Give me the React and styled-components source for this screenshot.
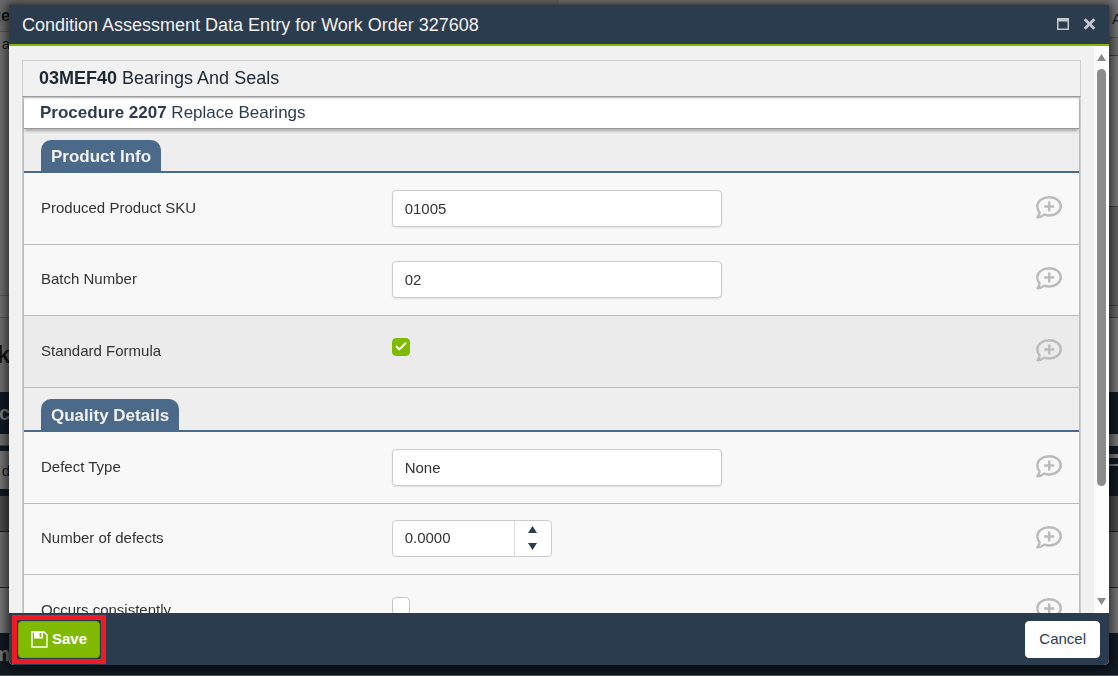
import React from "react";
import styled, { createGlobalStyle, css } from "styled-components";

const GlobalStyle = createGlobalStyle`
  *, *::before, *::after { box-sizing: border-box; }
  html, body { margin: 0; height: 100%; overflow: hidden; }
  body {
    background: #111a23;
    color: #333;
    font: 15px/20px "Liberation Sans", Arial, sans-serif;
  }
  button, input { font: inherit; color: inherit; }
  h1, h2, h3 { margin: 0; font: inherit; }
`;

/* Dimmed page behind the dialog */
const Underlay = styled.div`
  display: flex;
  justify-content: space-between;
  height: 100vh;
  overflow: hidden;
  background: #6b6b6b;
`;

const Strip = styled.div`
  flex: 1;
  display: flex;
  flex-direction: column;
  align-items: ${(p) => (p.$end ? "flex-end" : "flex-start")};
`;

const Band = styled.div`
  flex: none;
  display: flex;
  align-items: center;
  justify-content: ${(p) => (p.$end ? "flex-end" : "flex-start")};
  width: 100%;
  height: ${(p) => p.$h}px;
  background: ${(p) => p.$bg};
  border-bottom: ${(p) => (p.$line ? `1px solid ${p.$line}` : "0")};
  color: ${(p) => p.$ink || "#151515"};
  font-size: ${(p) => p.$size || 15}px;
  font-weight: ${(p) => (p.$bold ? 700 : 400)};
  line-height: 1;
`;

const Peek = styled.span`
  display: flex;
  justify-content: ${(p) => (p.$end ? "flex-start" : "flex-end")};
  width: ${(p) => (p.$end ? 6 : 10)}px;
  white-space: nowrap;
`;

const Dialog = styled.section`
  position: fixed;
  inset: 5px 9px 11px;
  display: flex;
  flex-direction: column;
  background: #f1f1f1;
  border-radius: 0 0 5px 5px;
  box-shadow: 0 1px 10px 3px rgba(0, 0, 0, 0.6);
`;

const TitleBar = styled.header`
  display: flex;
  align-items: center;
  gap: 14px;
  height: 41px;
  padding: 0 13px;
  background: #2c3c4f;
  border-bottom: 2px solid #80ba00;
  color: #f1f1f1;
`;

const Title = styled.h1`
  flex: 1;
  font-size: 18px;
  line-height: 24px;
`;

const WindowButton = styled.button`
  display: flex;
  margin-bottom: 2px;
  padding: 0;
  border: 0;
  background: none;
  color: #c3c8cd;
`;

const Viewport = styled.div`
  flex: 1;
  display: flex;
  min-height: 0;
`;

const ScrollArea = styled.div`
  flex: 1;
  min-width: 0;
  overflow-y: auto;
  scrollbar-width: none;
  padding: 14px 13px;
`;

const ScrollBar = styled.div`
  display: flex;
  flex-direction: column;
  align-items: center;
  width: 15px;
  padding: 8px 0;
  background: #fdfdfd;
  color: #8b8b8b;
`;

const Track = styled.div`
  flex: 1;
  width: 9px;
  margin: 8px 0;
`;

const Thumb = styled.div`
  height: 80%;
  border-radius: 5px;
  background: #8b8b8b;
`;

const Asset = styled.h2`
  height: 37px;
  padding: 0 16px;
  border: 1px solid #ccc;
  border-bottom-color: #9a9a9a;
  background: #f1f1f1;
  color: #1b2733;
  font-size: 18px;
  line-height: 34px;
`;

const Card = styled.div`
  border: solid #ccc;
  border-width: 0 1px;
`;

const Procedure = styled.h3`
  position: relative;
  height: 32px;
  padding: 0 16px;
  background: #fff;
  border-bottom: 1px solid #9a9a9a;
  box-shadow: 0 3px 3px -1px rgba(0, 0, 0, 0.3), inset 0 2px 2px -1px rgba(0, 0, 0, 0.3);
  color: #2c3c4f;
  font-size: 17px;
  line-height: 31px;
`;

const Group = styled.div`
  border: solid #bbb;
  border-width: 0 1px;
`;

const SectionHead = styled.div`
  display: flex;
  align-items: flex-end;
  height: 44px;
  padding: 0 17px;
  background: #eee;
  border-bottom: 2px solid #4b6a89;
`;

const Tab = styled.h3`
  height: 31px;
  padding: 0 10px;
  border-radius: 10px 10px 0 0;
  background: #4b6a89;
  color: #f1f1f1;
  font-size: 17px;
  font-weight: 700;
  line-height: 33px;
`;

const Rows = styled.div`
  padding-top: 1px;
  background: #f8f8f8;
`;

const Row = styled.div`
  display: grid;
  grid-template-columns: 1fr 2fr;
  align-items: center;
  height: ${(p) => (p.$check ? 72 : 71)}px;
  padding-bottom: 2px;
  border-bottom: 1px solid #bbb;
  background: ${(p) => (p.$active ? "#ebebeb" : "#f8f8f8")};
`;

const Label = styled.label`
  padding: 0 17px;
`;

const Control = styled.div`
  display: flex;
  align-items: center;
  justify-content: space-between;
  padding: 0 16px;
`;

const field = css`
  height: 37px;
  border: 1px solid #ccc;
  border-radius: 4px;
  background: #fff;
`;

const TextInput = styled.input`
  ${field}
  width: 330px;
  padding: 0 12px;
  box-shadow: 0 1px 2px rgba(0, 0, 0, 0.1);
  outline: 0;
`;

const Spinner = styled.div`
  ${field}
  display: flex;
  width: 160px;
`;

const NumberInput = styled.input`
  flex: 1;
  min-width: 0;
  padding: 0 12px;
  border: 0;
  border-right: 1px solid #ddd;
  border-radius: 4px 0 0 4px;
  background: none;
  outline: 0;
`;

const Steps = styled.div`
  display: flex;
  flex-direction: column;
  width: 36px;
`;

const Step = styled.button`
  flex: 1;
  display: flex;
  align-items: center;
  justify-content: center;
  padding: 0;
  border: 0;
  background: none;
  color: #2c3c4f;
`;

const CheckWrap = styled.span`
  display: grid;
  height: 26px;
  svg { grid-area: 1 / 1; margin: 3px; pointer-events: none; }
`;

const Check = styled.input`
  grid-area: 1 / 1;
  appearance: none;
  width: 18px;
  height: 18px;
  margin: 0;
  border: 1px solid #c4c4c4;
  border-radius: 4px;
  background: #fff;
  &:checked { border-color: #80ba00; background: #80ba00; }
  &:not(:checked) + svg { visibility: hidden; }
`;

const CommentButton = styled.button`
  display: flex;
  padding: 0;
  border: 0;
  background: none;
  color: #bbb;
`;

const Footer = styled.footer`
  display: flex;
  align-items: center;
  justify-content: space-between;
  height: 52px;
  padding: 0 9px 0 3px;
  border-radius: 0 0 5px 5px;
  background: #2c3c4f;
`;

const Highlight = styled.div`
  display: flex;
  padding: 1px;
  border: 5px solid #ed1c24;
`;

const Button = styled.button`
  display: flex;
  align-items: center;
  gap: 4px;
  height: 37px;
  padding: 0 ${(p) => (p.$primary ? 12 : 13)}px;
  border: 1px solid ${(p) => (p.$primary ? "#74a800" : "#fff")};
  border-radius: 4px;
  background: ${(p) => (p.$primary ? "#80ba00" : "#fff")};
  color: ${(p) => (p.$primary ? "#fff" : "#2c3c4f")};
  font-weight: ${(p) => (p.$primary ? 700 : 400)};
`;

const CommentIcon = () => (
  <svg width="28" height="26" viewBox="0 0 28 26" fill="none" stroke="currentColor" aria-hidden="true">
    <path
      d="M14.2 2.2C20.8 2.2 25.8 6.3 25.8 11.3S20.8 20.5 14.2 20.5C12.4 20.5 10.8 20.2 9.3 19.6C7.4 21.1 5.2 22.2 2.4 22.4C3.6 21 4.6 19.2 4.6 17.3C3.1 15.6 2.3 13.6 2.3 11.3C2.3 6.3 7.6 2.2 14.2 2.2Z"
      strokeWidth="2.4"
      strokeLinejoin="round"
    />
    <path d="M14.2 6.5V16.5M9.2 11.5H19.2" strokeWidth="2.4" />
  </svg>
);

const Triangle = ({ down, w = 9, h = 7 }) => (
  <svg width={w} height={h} viewBox="0 0 10 8" preserveAspectRatio="none" fill="currentColor" aria-hidden="true">
    <path d={down ? "M0 0H10L5 8Z" : "M0 8H10L5 0Z"} />
  </svg>
);

const SaveIcon = () => (
  <svg width="17" height="17" viewBox="0 0 17 17" fill="none" stroke="currentColor" aria-hidden="true">
    <path d="M1 1H13L16 4V16H1Z" strokeWidth="1.4" />
    <path d="M3 1H12V7.5H3Z" fill="currentColor" stroke="none" />
    <path d="M8.6 2H10.4V6H8.6Z" fill="#80ba00" stroke="none" />
  </svg>
);

const Comment = () => (
  <CommentButton type="button" aria-label="Add comment">
    <CommentIcon />
  </CommentButton>
);

const TextRow = ({ id, label, value }) => (
  <Row>
    <Label htmlFor={id}>{label}</Label>
    <Control>
      <TextInput id={id} defaultValue={value} />
      <Comment />
    </Control>
  </Row>
);

const CheckRow = ({ id, label, checked, active }) => (
  <Row $check $active={active}>
    <Label htmlFor={id}>{label}</Label>
    <Control>
      <CheckWrap>
        <Check type="checkbox" id={id} defaultChecked={checked} />
        <svg width="12" height="12" viewBox="0 0 12 12" fill="none" stroke="#fff" strokeWidth="2" aria-hidden="true">
          <path d="M1 5.2L4.3 8.4L11 1.8" />
        </svg>
      </CheckWrap>
      <Comment />
    </Control>
  </Row>
);

const NumberRow = ({ id, label, value }) => (
  <Row>
    <Label htmlFor={id}>{label}</Label>
    <Control>
      <Spinner>
        <NumberInput id={id} inputMode="decimal" defaultValue={value} />
        <Steps>
          <Step type="button" aria-label="Increase"><Triangle /></Step>
          <Step type="button" aria-label="Decrease"><Triangle down /></Step>
        </Steps>
      </Spinner>
      <Comment />
    </Control>
  </Row>
);

const leftBands = [
  { h: 32, bg: "#6b6b6b", line: "#555", text: "Re", bold: true, size: 16 },
  { h: 23, bg: "#707070", text: "a" },
  { h: 241, bg: "#6e6e6e", line: "#585858" },
  { h: 22, bg: "#707070", line: "#585858" },
  { h: 74, bg: "#6e6e6e", text: "k", bold: true, size: 24 },
  { h: 42, bg: "#111a23", text: "c", bold: true, size: 20, ink: "#777" },
  { h: 12, bg: "#6e6e6e", line: "#444" },
  { h: 5, bg: "#111a23" },
  { h: 38, bg: "#757575", text: "d" },
  { h: 7, bg: "#111a23" },
  { h: 36, bg: "#4a4a4a", line: "#222" },
  { h: 56, bg: "#6b6b6b", line: "#222" },
  { h: 45, bg: "#757575" },
  { h: 42, bg: "#111a23", text: "m", bold: true, size: 20, ink: "#777" },
  { h: 2, bg: "#555" },
];

const rightBands = [
  { h: 38, bg: "#757575", line: "#555", text: "A" },
  { h: 18, bg: "#6e6e6e", line: "#444" },
  { h: 151, bg: "#777", line: "#444" },
  { h: 99, bg: "#606060", line: "#444" },
  { h: 12, bg: "#666", line: "#444" },
  { h: 74, bg: "#777" },
  { h: 42, bg: "#111a23" },
  { h: 12, bg: "#757575" },
  { h: 8, bg: "#111a23" },
  { h: 4, bg: "#757575" },
  { h: 6, bg: "#111a23" },
  { h: 2, bg: "#757575" },
  { h: 30, bg: "#111a23" },
  { h: 36, bg: "#4a4a4a", line: "#222" },
  { h: 56, bg: "#666", line: "#222" },
  { h: 45, bg: "#757575" },
  { h: 42, bg: "#111a23" },
  { h: 2, bg: "#555" },
];

const Bands = ({ bands, end }) => (
  <Strip $end={end}>
    {bands.map((b, i) => (
      <Band key={i} $h={b.h} $bg={b.bg} $line={b.line} $bold={b.bold} $size={b.size} $ink={b.ink} $end={end}>
        {b.text && <Peek $end={end}>{b.text}</Peek>}
      </Band>
    ))}
  </Strip>
);

export default function App() {
  return (
    <>
      <GlobalStyle />
      <Underlay aria-hidden="true">
        <Bands bands={leftBands} />
        <Bands bands={rightBands} end />
      </Underlay>
      <Dialog role="dialog" aria-labelledby="dialog-title">
        <TitleBar>
          <Title id="dialog-title">Condition Assessment Data Entry for Work Order 327608</Title>
          <WindowButton type="button" aria-label="Maximize">
            <svg width="12" height="12" viewBox="0 0 12 12" fill="currentColor">
              <path fillRule="evenodd" d="M0 0H12V12H0ZM1.5 3.5V10.5H10.5V3.5Z" />
            </svg>
          </WindowButton>
          <WindowButton type="button" aria-label="Close">
            <svg width="13" height="12" viewBox="0 0 13 12" fill="none" stroke="currentColor" strokeWidth="2.8">
              <path d="M1.7 1.2L11.3 10.8M11.3 1.2L1.7 10.8" />
            </svg>
          </WindowButton>
        </TitleBar>
        <Viewport>
          <ScrollArea>
            <Asset><strong>03MEF40</strong> Bearings And Seals</Asset>
            <Card>
              <Group>
                <Procedure><strong>Procedure 2207</strong> Replace Bearings</Procedure>
                <SectionHead><Tab>Product Info</Tab></SectionHead>
                <Rows>
                  <TextRow id="sku" label="Produced Product SKU" value="01005" />
                  <TextRow id="batch" label="Batch Number" value="02" />
                  <CheckRow id="formula" label="Standard Formula" checked active />
                </Rows>
                <SectionHead><Tab>Quality Details</Tab></SectionHead>
                <Rows>
                  <TextRow id="defect" label="Defect Type" value="None" />
                  <NumberRow id="count" label="Number of defects" value="0.0000" />
                  <CheckRow id="consistent" label="Occurs consistently" />
                </Rows>
              </Group>
            </Card>
          </ScrollArea>
          <ScrollBar aria-hidden="true">
            <Triangle w={9} h={7} />
            <Track><Thumb /></Track>
            <Triangle down w={9} h={7} />
          </ScrollBar>
        </Viewport>
        <Footer>
          <Highlight>
            <Button type="button" $primary><SaveIcon />Save</Button>
          </Highlight>
          <Button type="button">Cancel</Button>
        </Footer>
      </Dialog>
    </>
  );
}
